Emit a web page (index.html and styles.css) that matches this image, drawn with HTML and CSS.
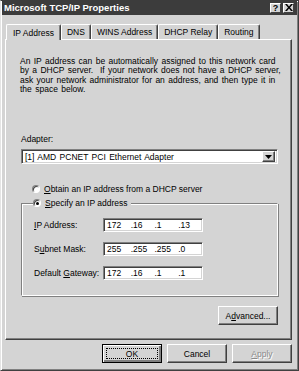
FILE: index.html
```html
<!DOCTYPE html>
<html>
<head>
  <title>Microsoft TCP/IP Properties</title>
  <link rel="stylesheet" href="styles.css">
</head>
<body>
  <div class="window">
    <div class="titlebar">
      <span class="title">Microsoft TCP/IP Properties</span>
      <div class="title-buttons">
        <span class="title-btn">?</span>
        <span class="title-btn close">
          <svg width="8" height="7" viewBox="0 0 8 7"><path d="M0 0h2l2 2.5 2-2.5h2l-3 3.5 3 3.5h-2l-2-2.5-2 2.5h-2l3-3.5z" fill="#000"/></svg>
        </span>
      </div>
    </div>

    <div class="tabs">
      <span class="tab active">IP Address</span>
      <span class="tab">DNS</span>
      <span class="tab">WINS Address</span>
      <span class="tab">DHCP Relay</span>
      <span class="tab">Routing</span>
    </div>

    <div class="panel">
      <p class="intro">An IP address can be automatically assigned to this network card<br>by a DHCP server.&nbsp; If your network does not have a DHCP server,<br>ask your network administrator for an address, and then type it in<br>the space below.</p>

      <div class="field-label">Adapter:</div>
      <div class="select">
        <span class="select-text">[1] AMD PCNET PCI Ethernet Adapter</span>
        <span class="select-btn">
          <svg width="7" height="4" viewBox="0 0 7 4"><path d="M0 0h7l-3.5 4z" fill="#000"/></svg>
        </span>
      </div>

      <div class="radio-row">
        <span class="radio"></span>
        <span><u>O</u>btain an IP address from a DHCP server</span>
      </div>

      <div class="group">
        <div class="legend">
          <span class="radio checked"></span>
          <span><u>S</u>pecify an IP address</span>
        </div>
        <div class="ip-row">
          <span class="ip-label"><u>I</u>P Address:</span>
          <div class="ip-box">
            <span class="octet">172</span><span class="octet">.16</span><span class="octet">.1</span><span class="octet">.13</span>
          </div>
        </div>
        <div class="ip-row">
          <span class="ip-label">S<u>u</u>bnet Mask:</span>
          <div class="ip-box">
            <span class="octet">255</span><span class="octet">.255</span><span class="octet">.255</span><span class="octet">.0</span>
          </div>
        </div>
        <div class="ip-row">
          <span class="ip-label">Default <u>G</u>ateway:</span>
          <div class="ip-box">
            <span class="octet">172</span><span class="octet">.16</span><span class="octet">.1</span><span class="octet">.1</span>
          </div>
        </div>
      </div>

      <div class="advanced-row">
        <button class="btn">A<u>d</u>vanced...</button>
      </div>
    </div>

    <div class="dialog-buttons">
      <button class="btn default"><span class="focus">OK</span></button>
      <button class="btn">Cancel</button>
      <button class="btn disabled"><u>A</u>pply</button>
    </div>
  </div>
</body>
</html>
```

FILE: styles.css
```css
body {
  margin: 0;
  font-family: "Liberation Sans", Arial, sans-serif;
  font-size: 8.5px;
  color: #000;
  background: #fff;
}

.window {
  width: 299px;
  height: 371px;
  box-sizing: border-box;
  background-color: #d4d4d4;
  border: 1px solid;
  border-color: #3c3c3c #404040 #404040 #e4e4e4;
  box-shadow: inset 1px 1px #fff, inset -1px -1px #808080;
  padding: 0 1px 0 1px;
  display: flex;
  flex-direction: column;
}

/* Title bar */
.titlebar {
  height: 15px;
  margin-top: -1px;
  background-color: #3c3c3c;
  color: #fff;
  display: flex;
  align-items: center;
  justify-content: space-between;
  padding: 0 3px 0 2px;
}

.title {
  font-weight: bold;
  font-size: 9.5px;
}

.title-buttons {
  display: flex;
  gap: 2px;
}

.title-btn {
  width: 11px;
  height: 10px;
  box-sizing: border-box;
  background-color: #d4d4d4;
  color: #000;
  font-weight: bold;
  font-size: 9px;
  line-height: 8px;
  text-align: center;
  border: 1px solid;
  border-color: #fff #404040 #404040 #fff;
  display: flex;
  align-items: center;
  justify-content: center;
}

/* Tabs */
.tabs {
  display: flex;
  align-items: flex-end;
  margin: 9px 0 0 4px;
  height: 15px;
}

.tab {
  height: 15px;
  box-sizing: border-box;
  padding: 0 5px;
  display: flex;
  align-items: center;
  border-top: 1px solid #fff;
  border-left: 1px solid #fff;
  border-right: 1px solid #404040;
  border-radius: 2px 2px 0 0;
  box-shadow: inset -1px 0 #808080;
}

.tab.active {
  height: 16px;
  margin-bottom: -1px;
  position: relative;
  background-color: #d4d4d4;
  padding: 0 6px 0 6px;
}

/* Tab panel */
.panel {
  margin: 0 5px 0 3px;
  height: 301px;
  box-sizing: border-box;
  border: 1px solid;
  border-color: #fff #404040 #404040 #fff;
  box-shadow: inset -1px -1px #808080;
  padding: 0 13px 0 15px;
  display: flex;
  flex-direction: column;
}

.intro {
  margin: 17px 0 0 -1px;
  line-height: 9.3px;
  word-spacing: 1px;
  white-space: nowrap;
}

.field-label {
  margin-top: 41px;
  line-height: 9px;
}

.select {
  margin-top: 5px;
  height: 15px;
  box-sizing: border-box;
  background-color: #fff;
  border: 1px solid;
  border-color: #808080 #fff #fff #808080;
  box-shadow: inset 1px 1px #404040, inset -1px -1px #d4d4d4;
  display: flex;
  align-items: center;
  padding: 2px;
}

.select-text {
  flex: 1;
  padding-left: 1px;
  word-spacing: 1px;
}

.select-btn {
  width: 13px;
  height: 11px;
  box-sizing: border-box;
  background-color: #d4d4d4;
  border: 1px solid;
  border-color: #fff #404040 #404040 #fff;
  box-shadow: inset -1px -1px #808080;
  display: flex;
  align-items: center;
  justify-content: center;
}

.radio-row {
  margin: 20px 0 0 11px;
  display: flex;
  align-items: center;
  gap: 4px;
  height: 10px;
}

.radio {
  width: 8px;
  height: 8px;
  box-sizing: border-box;
  border-radius: 50%;
  background-color: #fff;
  border: 1px solid;
  border-color: #808080 #fff #fff #808080;
  box-shadow: inset 1px 1px #404040;
  position: relative;
}

.radio.checked::after {
  content: "";
  position: absolute;
  left: 2px;
  top: 2px;
  width: 3px;
  height: 3px;
  border-radius: 50%;
  background-color: #000;
}

/* Group box */
.group {
  margin-top: 9px;
  height: 93px;
  box-sizing: border-box;
  border: 1px solid;
  border-color: #808080 #fff #fff #808080;
  box-shadow: inset 1px 1px #fff, 1px 1px #808080;
  padding: 0 0 0 12px;
  display: flex;
  flex-direction: column;
}

.legend {
  margin: -6px 0 0 -1px;
  align-self: flex-start;
  background-color: #d4d4d4;
  display: flex;
  align-items: center;
  gap: 4px;
  height: 10px;
  padding: 0 3px 0 0;
}

.ip-row {
  display: flex;
  align-items: center;
  margin-top: 10px;
}

.ip-label {
  width: 69px;
}

.ip-box {
  width: 100px;
  height: 14px;
  box-sizing: border-box;
  background-color: #fff;
  border: 1px solid;
  border-color: #808080 #fff #fff #808080;
  box-shadow: inset 1px 1px #404040, inset -1px -1px #d4d4d4;
  display: flex;
  align-items: center;
  padding-left: 3px;
}

.octet {
  width: 24px;
}

.advanced-row {
  display: flex;
  justify-content: flex-end;
  margin-top: 10px;
}

/* Buttons */
.btn {
  font-family: inherit;
  font-size: 8.5px;
  color: #000;
  width: 60px;
  height: 19px;
  padding: 0;
  background-color: #d4d4d4;
  border: 1px solid;
  border-color: #fff #404040 #404040 #fff;
  box-shadow: inset -1px -1px #808080;
}

.dialog-buttons {
  display: flex;
  justify-content: flex-end;
  gap: 5px;
  margin: 4px 5px 0 0;
}

.btn.default {
  border: 1px solid #000;
  box-shadow: inset 1px 1px #fff, inset -2px -2px #808080, inset -1px -1px #404040;
  padding: 3px;
}

.focus {
  display: block;
  height: 100%;
  box-sizing: border-box;
  border: 1px dotted #000;
  line-height: 10px;
}

.btn.disabled {
  color: #8a8a8a;
  text-shadow: 1px 1px #fff;
}
```
